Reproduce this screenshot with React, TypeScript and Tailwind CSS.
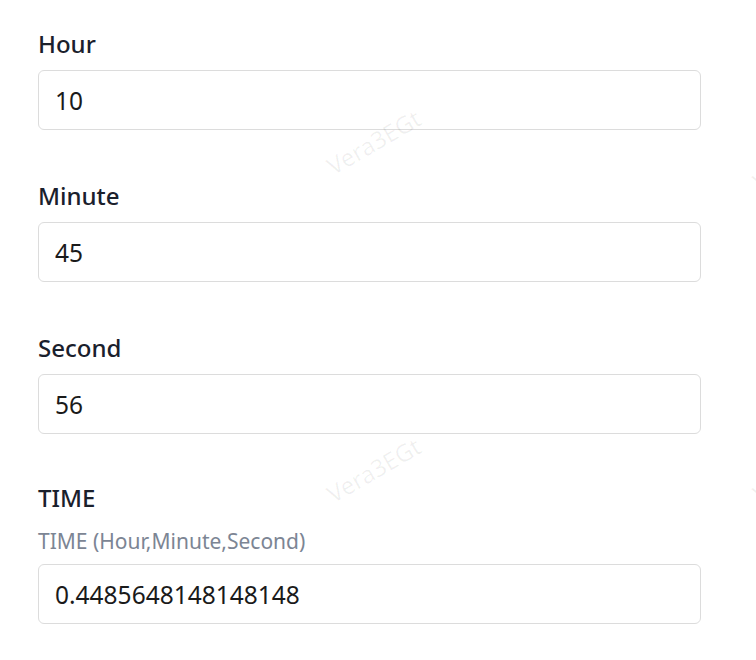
const FIELDS = [
  { label: 'Hour', value: '10' },
  { label: 'Minute', value: '45' },
  { label: 'Second', value: '56' },
];

function Field({ label, value, hint }: { label: string; value: string; hint?: string }) {
  return (
    <div className="flex flex-col">
      <label className="text-[24px] leading-[36px] font-medium text-[#1a202c]">{label}</label>
      {hint && <p className="text-[21px] leading-[30px] text-[#7c8594] mt-[10px]">{hint}</p>}
      <input
        readOnly
        value={value}
        className="mt-[8px] h-[60px] w-[663px] rounded-[6px] border border-[#dcdcdc] bg-white px-[16px] text-[24.5px] text-[#1a1a1a] outline-none"
      />
    </div>
  );
}

function Watermark({ className }: { className: string }) {
  return (
    <span
      className={`pointer-events-none absolute select-none text-[24px] text-black/[0.06] -rotate-30 ${className}`}
    >
      Vera3EGt
    </span>
  );
}

export default function App() {
  return (
    <div className="relative h-[660px] w-[756px] overflow-hidden bg-white font-['Noto_Sans',sans-serif]">
      <div className="flex flex-col gap-[48px] pl-[38px] pt-[26px]">
        {FIELDS.map((f) => (
          <Field key={f.label} label={f.label} value={f.value} />
        ))}
        <div className="mt-[-2px]">
          <Field label="TIME" value="0.4485648148148148" hint="TIME (Hour,Minute,Second)" />
        </div>
      </div>

      {/* 水印 */}
      <Watermark className="left-[322px] top-[124px]" />
      <Watermark className="left-[322px] top-[452px]" />
      <Watermark className="left-[748px] top-[140px]" />
      <Watermark className="left-[748px] top-[452px]" />
    </div>
  );
}
